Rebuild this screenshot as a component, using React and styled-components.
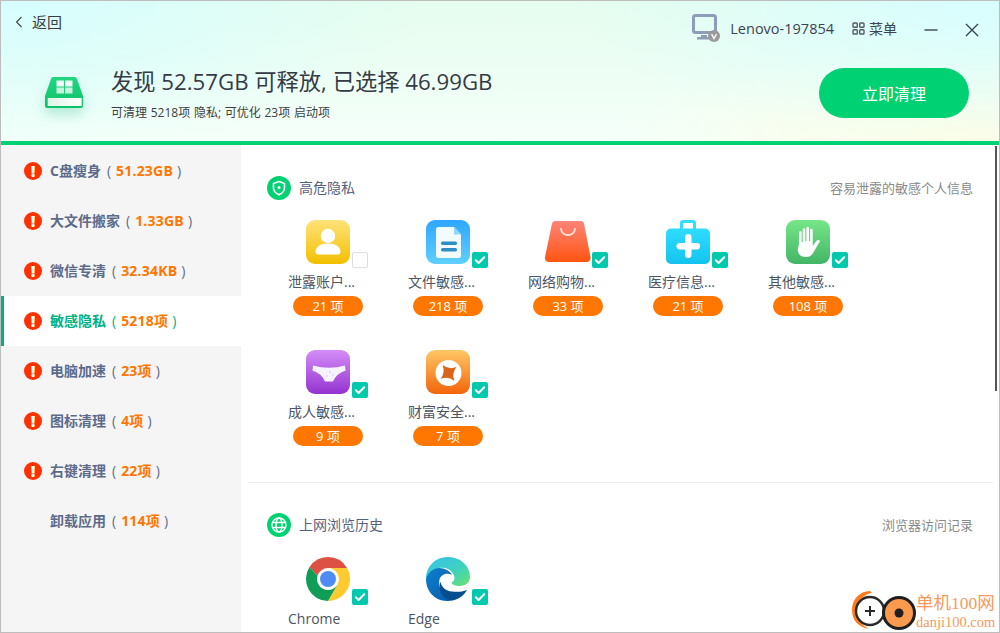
import React from 'react';
import styled, { createGlobalStyle } from 'styled-components';

const GlobalStyle = createGlobalStyle`
  html, body { margin: 0; padding: 0; background: #fff; }
  * { box-sizing: border-box; }
`;

const FONT = `"Open Sans", "Noto Sans CJK SC", sans-serif`;

const Win = styled.div`
  position: relative;
  width: 1000px;
  height: 633px;
  border: 1px solid #bdbdbd;
  background: #fff;
  overflow: hidden;
  font-family: ${FONT};
  color: #3c3c3c;
  display: flex;
  flex-direction: column;
`;

const Header = styled.header`
  height: 144px;
  flex: none;
  border-bottom: 4px solid #00d172;
  background:
    radial-gradient(ellipse 420px 150px at 100% 0%, #d8feff 0%, rgba(216,254,255,0) 100%),
    radial-gradient(ellipse 380px 110px at 100% 100%, #fffde4 0%, rgba(255,253,228,0) 100%),
    radial-gradient(ellipse 420px 150px at 0% 0%, #d6feff 0%, rgba(214,254,255,0) 100%),
    linear-gradient(180deg, #e6fdef 0%, #f4fff9 100%);
`;

const TopBar = styled.div`
  height: 64px;
  display: flex;
  justify-content: space-between;
  align-items: flex-start;
`;

const BackLink = styled.div`
  display: flex;
  align-items: center;
  gap: 9px;
  padding: 10px 0 0 14px;
  font-size: 15px;
  line-height: 22px;
`;

const TopRight = styled.div`
  display: flex;
  align-items: center;
  height: 28px;
  margin-top: 13px;
  padding-right: 20px;
`;

const PcName = styled.span`
  font-size: 14.5px;
  margin-left: 10px;
  color: #3d4350;
`;

const MenuBtn = styled.div`
  display: flex;
  align-items: center;
  gap: 4px;
  margin-left: 18px;
  font-size: 14px;
  color: #3d4350;
`;

const WinBtn = styled.svg`
  width: 14px;
  height: 14px;
  margin-left: ${p => p.$gap}px;
  margin-top: 4px;
  fill: none;
  stroke: #3b4252;
  stroke-width: 1.4;
`;

const Summary = styled.div`
  display: flex;
  align-items: flex-start;
  justify-content: space-between;
  padding: 0 30px 0 43px;
`;

const SummaryLeft = styled.div`
  display: flex;
  align-items: center;
  gap: 27px;
  margin-top: 2px;
`;

const DriveSvg = styled.svg`
  width: 40px;
  height: 32px;
  margin-top: -4px;
  filter: drop-shadow(0 7px 6px rgba(0, 170, 100, 0.22));
`;

const Headline = styled.div`
  font-size: 22.25px;
  line-height: 30px;
  color: #353b45;
`;

const SubLine = styled.div`
  font-size: 12px;
  line-height: 18px;
  margin-top: 7px;
  word-spacing: 0.6px;
  color: #3f3f3f;
`;

const CleanBtn = styled.button`
  width: 150px;
  height: 50px;
  margin-top: 3px;
  border: 0;
  border-radius: 25px;
  background: #00d172;
  color: #fff;
  font-family: ${FONT};
  font-size: 16px;
`;

const Body = styled.div`
  flex: 1;
  min-height: 0;
  display: flex;
`;

const Sidebar = styled.nav`
  width: 240px;
  flex: none;
  padding-top: 1px;
  background: #f5f5f5;
`;

const NavItem = styled.div`
  height: 50px;
  padding: 0 0 2px 23px;
  display: flex;
  align-items: center;
  font-size: 14px;
  font-weight: 700;
  color: ${p => (p.$active ? '#00b184' : '#5d6b8a')};
  background: ${p => (p.$active ? '#fff' : 'transparent')};
  box-shadow: ${p => (p.$active ? 'inset 3px 0 0 #00b184' : 'none')};
`;

const Alert = styled.span`
  width: 18px;
  height: 18px;
  margin: 2px 8px 0 0;
  flex: none;
  border-radius: 50%;
  background: #ff3000;
  color: #fff;
  font-size: 16px;
  font-weight: 800;
  line-height: 18px;
  text-align: center;
  visibility: ${p => (p.$hidden ? 'hidden' : 'visible')};
`;

const Paren = styled.span`
  font-weight: 400;
  margin: ${p => (p.$open ? '0 5px 0 6px' : '0 0 0 4px')};
`;

const NavValue = styled.span`
  color: #ff7700;
  letter-spacing: 0.2px;
`;

const Content = styled.main`
  flex: 1;
  min-width: 0;
  overflow: hidden;
`;

const Section = styled.section`
  padding: ${p => p.$top}px 26px 0 26px;
`;

const SectionHead = styled.div`
  display: flex;
  align-items: center;
  height: 24px;
`;

const SectionIcon = styled.svg`
  width: 24px;
  height: 24px;
  flex: none;
  margin-right: 8px;
`;

const SectionTitle = styled.span`
  flex: 1;
  margin-top: -2px;
  font-size: 14px;
  color: #56617d;
`;

const SectionNote = styled.span`
  margin-top: -2px;
  font-size: 13px;
  color: #8a8a8a;
`;

const Grid = styled.div`
  display: grid;
  grid-template-columns: repeat(5, 120px);
  row-gap: 34px;
  margin: 20px 0 0 1px;
`;

const Item = styled.div`
  height: 96px;
`;

const IconWrap = styled.div`
  position: relative;
  width: 44px;
  height: 44px;
  margin-left: 38px;

  > svg:first-child {
    overflow: visible;
    display: block;
  }
`;

const Check = styled.span`
  position: absolute;
  left: 46px;
  top: 32px;
  width: 16px;
  height: 16px;
  border-radius: 2px;
  background: ${p => (p.$on ? '#00c9ae' : '#fff')};
  border: ${p => (p.$on ? '0' : '1px solid #dedede')};
  display: flex;
  align-items: center;
  justify-content: center;
`;

const ItemLabel = styled.div`
  margin: 8px 0 0 20px;
  font-size: 14px;
  line-height: 20px;
  color: #4d5463;
  white-space: nowrap;
`;

const Pill = styled.div`
  width: 70px;
  height: 20px;
  margin: 4px 0 0 25px;
  border-radius: 10px;
  background: #ff7700;
  color: #fff;
  font-size: 13px;
  line-height: 20px;
  text-align: center;
`;

const Divider = styled.hr`
  height: 1px;
  margin: 36px 6px 0 7px;
  border: 0;
  background: #ececec;
`;

const ScrollThumb = styled.div`
  position: absolute;
  right: 2px;
  top: 145px;
  width: 2px;
  height: 245px;
  background: #555;
`;

const Watermark = styled.div`
  position: absolute;
  right: 0;
  bottom: 0;
  width: 147px;
  height: 44px;
  display: flex;
  align-items: center;
  background: #fff;
`;

const WmText = styled.div`
  margin-left: -2px;
  padding-top: 4px;
  font-family: "Liberation Serif", "Noto Sans CJK SC", serif;
  color: #f79a5b;
  white-space: nowrap;
`;

const WmTitle = styled.div`
  font-size: 17.5px;
  line-height: 21px;
`;

const WmUrl = styled.div`
  font-size: 14.5px;
  line-height: 17px;
`;

const Tick = () => (
  <svg width="12" height="12" viewBox="0 0 12 12" fill="none" stroke="#fff" strokeWidth="2" strokeLinecap="round" strokeLinejoin="round">
    <path d="M1.8 6.2 4.6 9l5.6-5.8" />
  </svg>
);

const Grad = ({ id, from, to }) => (
  <linearGradient id={id} x1="0" y1="0" x2="0" y2="1">
    <stop offset="0" stopColor={from} />
    <stop offset="1" stopColor={to} />
  </linearGradient>
);

const Drive = () => (
  <DriveSvg viewBox="0 0 40 32">
    <defs>
      <Grad id="drv" from="#22d67f" to="#0cc269" />
      <linearGradient id="drvBar" x1="0" y1="0" x2="1" y2="0">
        <stop offset="0" stopColor="#dff3e6" />
        <stop offset="1" stopColor="#fff" />
      </linearGradient>
    </defs>
    <path d="M7 2a2.500 2.500 0 0 1 2.500-2h21a2.500 2.500 0 0 1 2.500 2L39 19v10a2 2 0 0 1-2 2H3a2 2 0 0 1-2-2V19z" fill="url(#drv)" />
    <rect x="3.700" y="21" width="34" height="8" fill="url(#drvBar)" />
    <g fill="#fff">
      <rect x="12.500" y="3.500" width="7.500" height="6" opacity=".95" />
      <rect x="21" y="3.500" width="7.500" height="6" opacity=".95" />
      <rect x="12.500" y="10.500" width="7.500" height="6" opacity=".75" />
      <rect x="21" y="10.500" width="7.500" height="6" opacity=".75" />
    </g>
  </DriveSvg>
);

const Monitor = () => (
  <svg width="28" height="28" viewBox="0 0 28 28">
    <rect x="1.500" y="1.500" width="22" height="17" rx="2" fill="none" stroke="#8e9cb8" strokeWidth="3" />
    <path d="M9 21h6v2h6v2.500H5V23h4z" fill="#8e9cb8" />
    <circle cx="22" cy="22" r="6" fill="#9a9a9a" />
    <path d="M19.600 20l2.400 4.600 2.400-4.600" fill="none" stroke="#fff" strokeWidth="1.400" />
  </svg>
);

const MenuGlyph = () => (
  <svg width="13" height="13" viewBox="0 0 13 13" fill="none" stroke="#555c68" strokeWidth="1.400">
    <rect x="1" y="1" width="4.300" height="4.300" rx=".8" />
    <rect x="7.700" y="1" width="4.300" height="4.300" rx=".8" />
    <rect x="1" y="7.700" width="4.300" height="4.300" rx=".8" />
    <rect x="7.700" y="7.700" width="4.300" height="4.300" rx=".8" />
  </svg>
);

const AccountIcon = () => (
  <svg width="44" height="44" viewBox="0 0 44 44">
    <defs><Grad id="acc" from="#ffe27a" to="#f2c000" /></defs>
    <rect width="44" height="44" rx="9" fill="url(#acc)" />
    <circle cx="22" cy="16" r="7.200" fill="#fff" />
    <path d="M9.500 32c0-5.500 5-8.500 12.500-8.500S34.500 26.500 34.500 32c0 1.500-1 2.500-2.500 2.500H12c-1.500 0-2.500-1-2.500-2.500z" fill="#fff" />
  </svg>
);

const FileIcon = () => (
  <svg width="44" height="44" viewBox="0 0 44 44">
    <defs><Grad id="fil" from="#2fa6ff" to="#5fd0ff" /></defs>
    <rect width="44" height="44" rx="9" fill="url(#fil)" />
    <path d="M12.500 7H28l7 7.500V35.500a2.500 2.500 0 0 1-2.500 2.500H12.500a2.500 2.500 0 0 1-2.500-2.500v-26A2.500 2.500 0 0 1 12.500 7z" fill="#f2fbff" />
    <path d="M28 7l7 7.500h-7z" fill="#8fd6fb" />
    <rect x="15" y="21.500" width="16" height="3.400" rx="1.600" fill="#2b8fc4" />
    <rect x="15" y="28" width="16" height="3.400" rx="1.600" fill="#2b8fc4" />
  </svg>
);

const BagIcon = () => (
  <svg width="44" height="44" viewBox="0 0 44 44">
    <defs><Grad id="bag" from="#ff8478" to="#ff5511" /></defs>
    <path d="M9 1h26a3 3 0 0 1 3 2.500L44.500 37a4 4 0 0 1-4 5H3a4 4 0 0 1-4-5L6 3.500A3 3 0 0 1 9 1z" fill="url(#bag)" />
    <path d="M15 9c1 8 13 8 14 0" fill="none" stroke="#ffe3d8" strokeWidth="2" strokeLinecap="round" />
  </svg>
);

const MedIcon = () => (
  <svg width="44" height="44" viewBox="0 0 44 44">
    <defs><Grad id="med" from="#2fdcff" to="#12c4ee" /></defs>
    <path d="M15.500 9V3a1.500 1.500 0 0 1 1.500-1.500h10A1.500 1.500 0 0 1 28.500 3v6" fill="none" stroke="#35dcff" strokeWidth="3" />
    <rect y="8.500" width="44" height="35.500" rx="5" fill="url(#med)" />
    <rect x="10.500" y="23" width="23.500" height="6.500" rx="3.200" fill="#fff" />
    <rect x="19" y="14" width="6.500" height="24" rx="3.200" fill="#fff" />
  </svg>
);

const HandIcon = () => (
  <svg width="44" height="44" viewBox="0 0 44 44">
    <defs><Grad id="hnd" from="#76e688" to="#43b566" /></defs>
    <rect width="44" height="44" rx="9" fill="url(#hnd)" />
    <path d="M13 24V12.500a1.300 1.300 0 0 1 2.600 0V22h1.100V9.500a1.300 1.300 0 0 1 2.600 0V21h1.100V8a1.300 1.300 0 0 1 2.600 0v13h1.100V10a1.300 1.300 0 0 1 2.600 0v16l3.700-5c1.500-1.800 4-.8 3.300 1-2.500 3-4.500 8-6.500 10.800-1.500 2.500-3.500 4.200-7.200 4.200-5.500 0-8-3-8.300-7z" fill="#fff" />
  </svg>
);

const AdultIcon = () => (
  <svg width="44" height="44" viewBox="0 0 44 44">
    <defs><Grad id="adu" from="#d48df7" to="#9433d0" /></defs>
    <rect width="44" height="44" rx="9" fill="url(#adu)" />
    <path d="M7 15.500Q23 20 39 15.500L39.500 20.500Q31 23 27 31.500H19Q15 23 6.500 20.500z" fill="#f8f4ff" />
    <circle cx="24" cy="22" r="1" fill="#e2d6f7" />
    <circle cx="27" cy="25" r="1" fill="#e2d6f7" />
    <circle cx="21" cy="26" r="1" fill="#e2d6f7" />
  </svg>
);

const WealthIcon = () => (
  <svg width="44" height="44" viewBox="0 0 44 44">
    <defs><Grad id="wea" from="#ffc766" to="#f3640a" /></defs>
    <rect width="44" height="44" rx="9" fill="url(#wea)" />
    <circle cx="22.500" cy="23" r="13" fill="#fff" />
    <path transform="rotate(8 22.500 23)" d="M15.500 16Q22.500 20 29.500 16Q25.500 23 29.500 30Q22.500 26 15.500 30Q19.500 23 15.500 16z" fill="#d9641a" />
  </svg>
);

const ChromeIcon = () => (
  <svg width="44" height="44" viewBox="0 0 44 44">
    <path d="M22 0a22 22 0 0 1 19.050 11H22a11 11 0 0 0-10.500 7.700L3.500 10A22 22 0 0 1 22 0z" fill="#dd5044" />
    <path d="M41.050 11A22 22 0 0 1 22 44l9.500-16.500A11 11 0 0 0 30 14.500 11 11 0 0 0 22 11z" fill="#fdca2f" />
    <path d="M3.500 10l8 8.700A11 11 0 0 0 22 33a11 11 0 0 0 9.500-5.500L22 44A22 22 0 0 1 3.500 10z" fill="#0f9d58" />
    <circle cx="22" cy="22" r="10" fill="#fff" />
    <circle cx="22" cy="22" r="8" fill="#4f8bf5" />
  </svg>
);

const EdgeIcon = () => (
  <svg width="44" height="44" viewBox="0 0 44 44">
    <defs>
      <linearGradient id="edgeTop" x1="0" y1="0" x2="1" y2="1">
        <stop offset="0" stopColor="#35c1f1" />
        <stop offset=".6" stopColor="#3fd3b8" />
        <stop offset="1" stopColor="#6ee06b" />
      </linearGradient>
      <linearGradient id="edgeLow" x1="0" y1="0" x2="1" y2="1">
        <stop offset="0" stopColor="#0c7fd0" />
        <stop offset="1" stopColor="#0a5ea8" />
      </linearGradient>
    </defs>
    <path d="M22 0c13 0 22 9.500 22 19.500 0 6-4.500 9.500-10 9.500-5 0-8-1.500-8.500-3.500 3-1.500 3.500-4 2.500-7C26 13 20 9.500 13 11 7 12.500 2 17 0 22 0 9 9.500 0 22 0z" fill="url(#edgeTop)" />
    <path d="M0 22c1.500-6 7-11 13-11 6 0 11 3 13 7-4-2.500-11-1-12.500 4.500C12 29 15 37 24 43.700 10 45.500 0 35 0 22z" fill="url(#edgeLow)" />
    <path d="M24 43.800C16 41 11.500 32 14.500 24.500c.5 5 5 9.500 11.500 10 5 .5 10 .5 15-1.500-3.500 6-9.500 10.300-17 10.800z" fill="#064d8f" />
  </svg>
);

const WmLogo = () => (
  <svg width="66" height="44" viewBox="0 0 66 44">
    <path d="M18 3C7 3 0 12 0 22c0 10 6 17 17 19-8-4-13-11-12-20C6 12 12 6 20 5z" fill="#ff7a1a" />
    <circle cx="18" cy="23" r="14" fill="#fff" stroke="#2a2a2a" strokeWidth="2.400" />
    <path d="M13 23h10M18 18v10" stroke="#2a2a2a" strokeWidth="2" />
    <circle cx="47" cy="25" r="15.500" fill="#f99a4f" stroke="#1f1f1f" strokeWidth="3" />
    <circle cx="47" cy="25" r="4.500" fill="#1f1f1f" />
  </svg>
);

const NAV = [
  { label: 'C盘瘦身', value: '51.23GB', warn: true },
  { label: '大文件搬家', value: '1.33GB', warn: true },
  { label: '微信专清', value: '32.34KB', warn: true },
  { label: '敏感隐私', value: '5218项', warn: true, active: true },
  { label: '电脑加速', value: '23项', warn: true },
  { label: '图标清理', value: '4项', warn: true },
  { label: '右键清理', value: '22项', warn: true },
  { label: '卸载应用', value: '114项', warn: false },
];

const PRIVACY = [
  { icon: AccountIcon, label: '泄露账户...', count: '21 项', on: false },
  { icon: FileIcon, label: '文件敏感...', count: '218 项', on: true },
  { icon: BagIcon, label: '网络购物...', count: '33 项', on: true },
  { icon: MedIcon, label: '医疗信息...', count: '21 项', on: true },
  { icon: HandIcon, label: '其他敏感...', count: '108 项', on: true },
  { icon: AdultIcon, label: '成人敏感...', count: '9 项', on: true },
  { icon: WealthIcon, label: '财富安全...', count: '7 项', on: true },
];

const BROWSERS = [
  { icon: ChromeIcon, label: 'Chrome', on: true },
  { icon: EdgeIcon, label: 'Edge', on: true },
];

const Card = ({ icon: Icon, label, count, on }) => (
  <Item>
    <IconWrap>
      <Icon />
      <Check $on={on}>{on && <Tick />}</Check>
    </IconWrap>
    <ItemLabel>{label}</ItemLabel>
    {count && <Pill>{count}</Pill>}
  </Item>
);

export default function App() {
  return (
    <>
      <GlobalStyle />
      <Win>
        <Header>
          <TopBar>
            <BackLink>
              <svg width="8" height="12" viewBox="0 0 8 12" fill="none" stroke="#444" strokeWidth="1.100">
                <path d="M6.500 1 1.500 6l5 5" />
              </svg>
              返回
            </BackLink>
            <TopRight>
              <Monitor />
              <PcName>Lenovo-197854</PcName>
              <MenuBtn><MenuGlyph />菜单</MenuBtn>
              <WinBtn $gap={27} viewBox="0 0 14 14"><path d="M0.500 7h13" /></WinBtn>
              <WinBtn $gap={27} viewBox="0 0 14 14"><path d="M1 1l12 12M13 1 1 13" /></WinBtn>
            </TopRight>
          </TopBar>
          <Summary>
            <SummaryLeft>
              <Drive />
              <div>
                <Headline>发现 52.57GB 可释放, 已选择 46.99GB</Headline>
                <SubLine>可清理 5218项 隐私; 可优化 23项 启动项</SubLine>
              </div>
            </SummaryLeft>
            <CleanBtn>立即清理</CleanBtn>
          </Summary>
        </Header>
        <Body>
          <Sidebar>
            {NAV.map(n => (
              <NavItem key={n.label} $active={n.active}>
                <Alert $hidden={!n.warn}>!</Alert>
                {n.label}
                <Paren $open>(</Paren>
                <NavValue>{n.value}</NavValue>
                <Paren>)</Paren>
              </NavItem>
            ))}
          </Sidebar>
          <Content>
            <Section $top={31}>
              <SectionHead>
                <SectionIcon viewBox="0 0 24 24">
                  <circle cx="12" cy="12" r="12" fill="#00d172" />
                  <path d="M12 5.500l5.500 2v4.500c0 3.500-2.500 5.500-5.500 6.800C9 17.500 6.500 15.500 6.500 12V7.500z" fill="none" stroke="#fff" strokeWidth="1.600" />
                  <circle cx="12" cy="11.500" r="1.500" fill="#fff" />
                </SectionIcon>
                <SectionTitle>高危隐私</SectionTitle>
                <SectionNote>容易泄露的敏感个人信息</SectionNote>
              </SectionHead>
              <Grid>
                {PRIVACY.map(c => <Card key={c.label} {...c} />)}
              </Grid>
            </Section>
            <Divider />
            <Section $top={30}>
              <SectionHead>
                <SectionIcon viewBox="0 0 24 24">
                  <circle cx="12" cy="12" r="12" fill="#00d172" />
                  <g fill="none" stroke="#fff" strokeWidth="1.400">
                    <circle cx="12" cy="12" r="7" />
                    <ellipse cx="12" cy="12" rx="3" ry="7" />
                    <path d="M5.500 9.500h13M5.500 14.500h13" />
                  </g>
                </SectionIcon>
                <SectionTitle>上网浏览历史</SectionTitle>
                <SectionNote>浏览器访问记录</SectionNote>
              </SectionHead>
              <Grid>
                {BROWSERS.map(c => <Card key={c.label} {...c} />)}
              </Grid>
            </Section>
          </Content>
        </Body>
        <ScrollThumb />
        <Watermark>
          <WmLogo />
          <WmText>
            <WmTitle>单机100网</WmTitle>
            <WmUrl>danji100.com</WmUrl>
          </WmText>
        </Watermark>
      </Win>
    </>
  );
}
